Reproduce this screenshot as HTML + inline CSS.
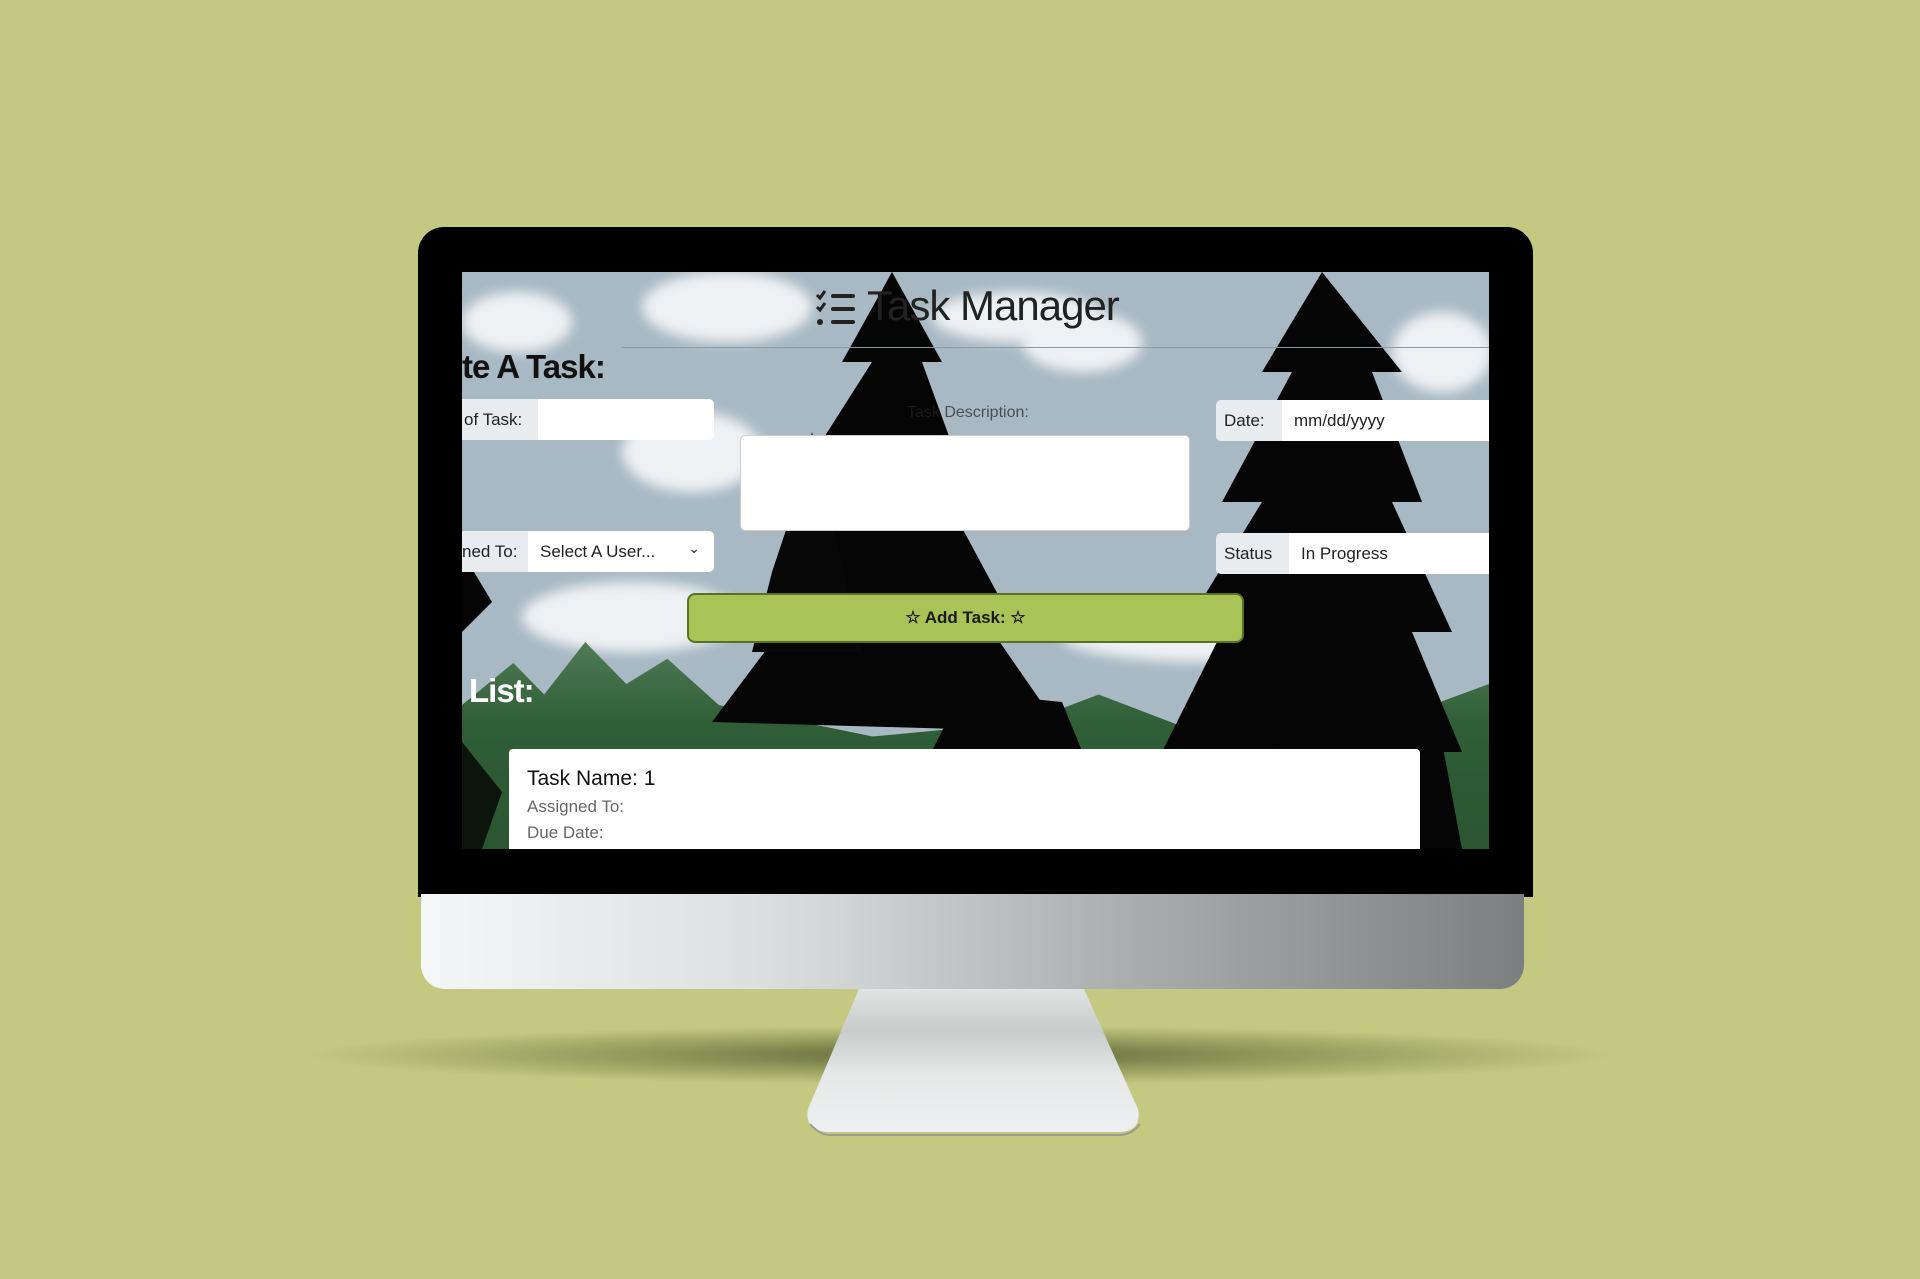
<!DOCTYPE html>
<html><head><meta charset="utf-8">
<style>
*{box-sizing:border-box;margin:0;padding:0}
body{width:1920px;height:1279px;background:#c3c980;position:relative;overflow:hidden;font-family:"Liberation Sans",sans-serif}
.abs{position:absolute}
#bezel{left:418px;top:227px;width:1115px;height:670px;background:#000;border-radius:26px 26px 0 0}
#chin{left:421px;top:894px;width:1103px;height:95px;border-radius:0 0 24px 24px;background:linear-gradient(90deg,#f4f6f7 0%,#dde0e0 30%,#a9acac 65%,#7c7f80 100%)}
#screen{left:462px;top:272px;width:1027px;height:577px;overflow:hidden;background:#a9b9c4}
.lbl{background:#e9ecef;color:#222;font-size:17px;display:flex;align-items:center;padding-left:8px;border-radius:5px 0 0 5px}
.inp{background:#fff;color:#222;font-size:17px;display:flex;align-items:center;padding-left:12px}
.cloud{background:#eef1f3;border-radius:50%;filter:blur(6px)}
</style></head><body>
<div class="abs" style="left:300px;top:1025px;width:1320px;height:60px;border-radius:50%;background:radial-gradient(ellipse at center,rgba(70,80,40,.8) 0%,rgba(90,100,50,.4) 40%,rgba(195,201,128,0) 70%)"></div>
<div id="bezel" class="abs"></div>
<div id="chin" class="abs"></div>
<svg class="abs" style="left:800px;top:989px" width="350" height="150">
<defs><linearGradient id="g" x1="0" y1="0" x2="0" y2="1"><stop offset="0" stop-color="#e2e4e4"/><stop offset=".3" stop-color="#c9cbcb"/><stop offset=".6" stop-color="#e6e8e8"/><stop offset="1" stop-color="#eeeff0"/></linearGradient></defs>
<path d="M59 0 L284 0 L338 120 Q342 142 320 143 L27 143 Q4 142 8 120 Z" fill="url(#g)"/>
<path d="M10 135 Q20 146 30 146 L318 146 Q332 146 340 135" stroke="#9a9c8e" stroke-width="2" fill="none"/>
</svg>
<div id="screen" class="abs">
 <div class="abs cloud" style="left:180px;top:0;width:170px;height:70px"></div>
 <div class="abs cloud" style="left:0;top:20px;width:110px;height:60px"></div>
 <div class="abs cloud" style="left:470px;top:20px;width:170px;height:50px"></div>
 <div class="abs cloud" style="left:560px;top:40px;width:120px;height:60px"></div>
 <div class="abs cloud" style="left:930px;top:40px;width:100px;height:80px"></div>
 <div class="abs cloud" style="left:160px;top:140px;width:140px;height:80px"></div>
 <div class="abs cloud" style="left:60px;top:310px;width:220px;height:70px"></div>
 <div class="abs cloud" style="left:600px;top:340px;width:300px;height:50px"></div>
 <div class="abs" style="left:0;top:370px;width:1027px;height:210px;background:linear-gradient(180deg,#4f7a55 0%,#2f5e36 40%,#2a5530 100%);clip-path:polygon(0 30%,5% 10%,8% 25%,12% 0,16% 20%,20% 8%,25% 30%,40% 45%,55% 38%,62% 25%,70% 40%,80% 30%,90% 38%,100% 20%,100% 100%,0 100%)"></div>
 <svg class="abs" style="left:0;top:0" width="1027" height="577">
  <path d="M430 0 L380 90 L410 90 L340 200 L380 200 L300 330 L340 330 L250 450 L600 460 L510 330 L540 330 L470 200 L500 200 L460 90 L480 90 Z" fill="#050505"/>
  <path d="M350 160 L330 240 L310 300 L290 380 L400 380 Z" fill="#080808"/>
  <path d="M860 0 L800 100 L830 100 L760 230 L800 230 L720 360 L760 360 L700 480 L1000 480 L950 360 L990 360 L930 230 L960 230 L910 100 L940 100 Z" fill="#050505"/>
  <path d="M0 280 L30 330 L0 360 Z" fill="#050505"/>
  <path d="M500 420 L420 577 L660 577 L600 430 Z" fill="#050505"/>
  <path d="M820 460 L760 577 L1000 577 L980 470 Z" fill="#050505"/>
  <path d="M0 470 L40 520 L20 577 L0 577 Z" fill="#0b150c"/>
 </svg>
 <svg class="abs" style="left:353px;top:18px" width="42" height="38" viewBox="0 0 42 38">
  <path d="M2 5 L5 8 L10 1 M2 17 L5 20 L10 13" stroke="#222" stroke-width="3" fill="none"/>
  <circle cx="5" cy="32" r="3" fill="#222"/>
  <rect x="16" y="4" width="24" height="4" rx="2" fill="#222"/><rect x="16" y="17" width="24" height="4" rx="2" fill="#222"/><rect x="16" y="30" width="24" height="4" rx="2" fill="#222"/>
 </svg>
 <div class="abs" style="left:405px;top:10px;font-size:42px;color:#222;letter-spacing:-1px">Task Manager</div>
 <div class="abs" style="left:160px;top:75px;width:867px;height:1px;background:#8d9aa1"></div>
 <div class="abs" style="left:0;top:76px;font-size:33px;color:#111;font-weight:bold;letter-spacing:-1px">te A Task:</div>
 <div class="abs lbl" style="left:0;top:127px;width:76px;height:41px;border-radius:0;padding-left:2px">of Task:</div>
 <div class="abs inp" style="left:76px;top:127px;width:176px;height:41px;border-radius:0 5px 5px 0"></div>
 <div class="abs" style="left:445px;top:132px;font-size:16px;color:#222;opacity:.7">Task Description:</div>
 <div class="abs" style="left:278px;top:163px;width:450px;height:96px;background:#fff;border:1px solid #ccc;border-radius:5px"></div>
 <div class="abs lbl" style="left:754px;top:128px;width:66px;height:41px">Date:</div>
 <div class="abs inp" style="left:820px;top:128px;width:207px;height:41px">mm/dd/yyyy</div>
 <div class="abs lbl" style="left:0;top:259px;width:66px;height:41px;border-radius:0;padding-left:0">ned To:</div>
 <div class="abs inp" style="left:66px;top:259px;width:186px;height:41px;border-radius:0 5px 5px 0">Select A User...<span style="position:absolute;right:14px;top:9px;font-size:14px">&#8964;</span></div>
 <div class="abs lbl" style="left:754px;top:261px;width:73px;height:41px">Status</div>
 <div class="abs inp" style="left:827px;top:261px;width:200px;height:41px">In Progress</div>
 <div class="abs" style="left:225px;top:321px;width:557px;height:50px;background:#a8c356;border:2px solid #5a7026;border-radius:8px;display:flex;align-items:center;justify-content:center;font-size:17px;font-weight:bold;color:#1a1a1a">☆ Add Task: ☆</div>
 <div class="abs" style="left:7px;top:400px;font-size:33px;color:#fff;font-weight:bold;letter-spacing:-1px">List:</div>
 <div class="abs" style="left:47px;top:477px;width:911px;height:110px;background:#fff;border-radius:4px;padding:18px 18px">
  <div style="font-size:21px;color:#111">Task Name: 1</div>
  <div style="font-size:17px;color:#666;margin-top:6px">Assigned To:</div>
  <div style="font-size:17px;color:#666;margin-top:6px">Due Date:</div>
 </div>
</div>
</body></html>
